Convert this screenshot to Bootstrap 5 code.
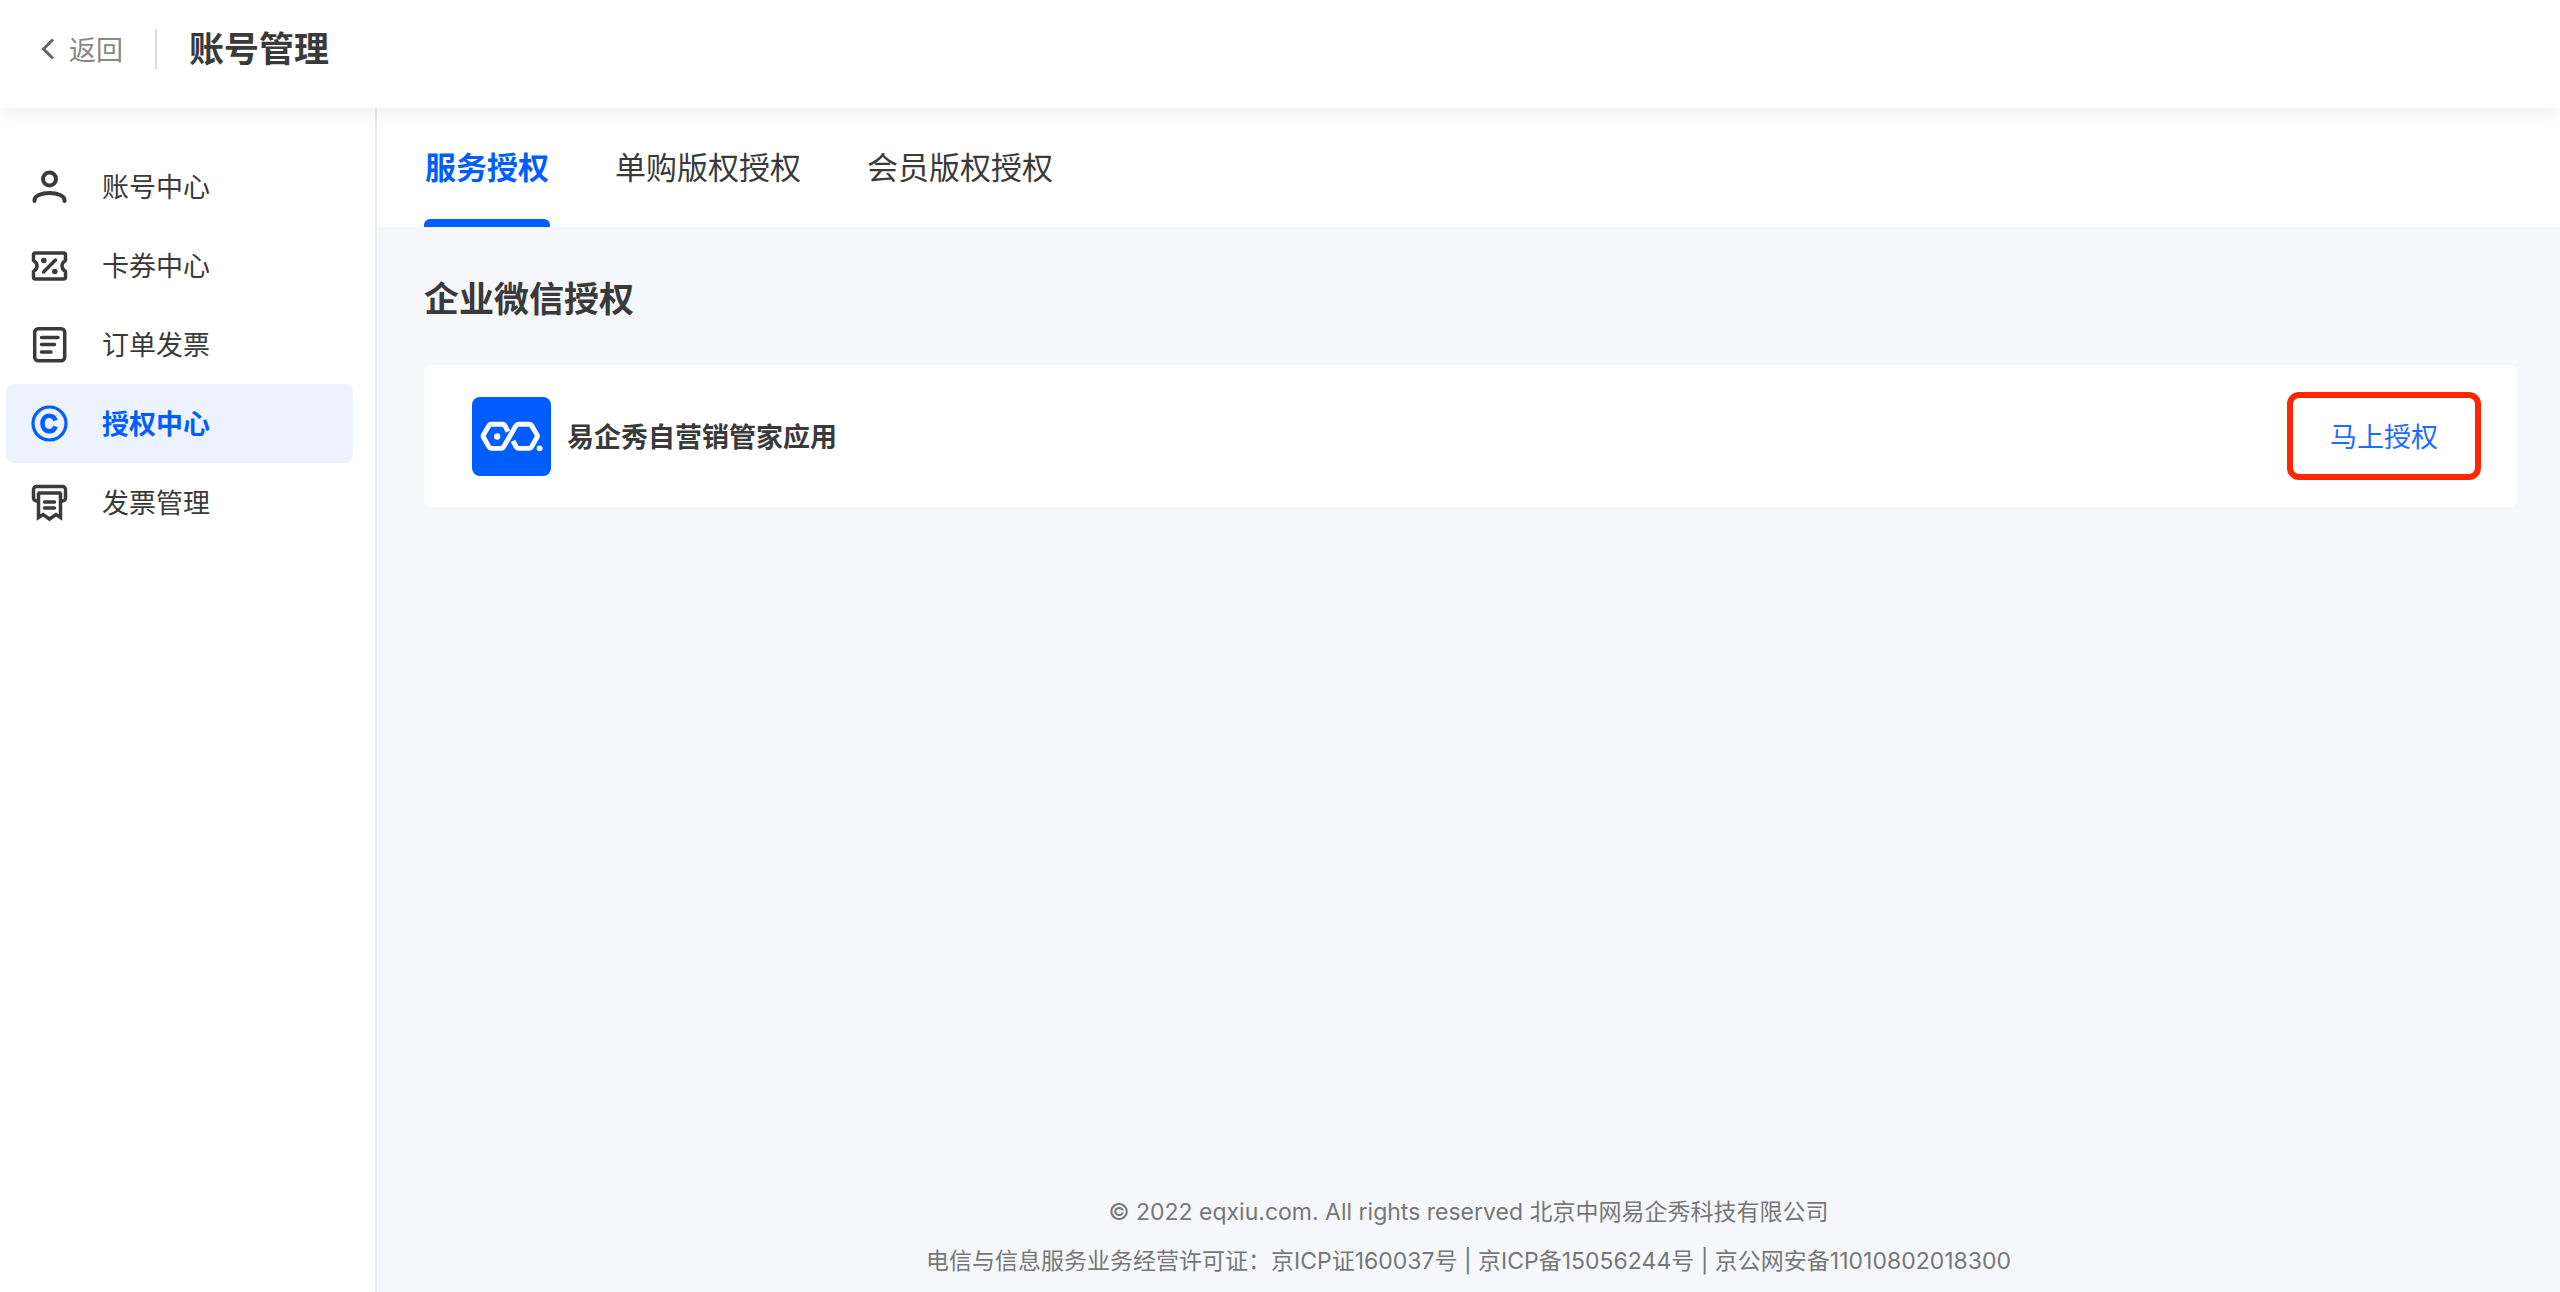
<!DOCTYPE html>
<html lang="zh-CN">
<head>
<meta charset="utf-8">
<meta name="viewport" content="width=device-width, initial-scale=1">
<title>账号管理</title>
<link href="https://cdn.jsdelivr.net/npm/bootstrap@5.3.0/dist/css/bootstrap.min.css" rel="stylesheet">
<style>
  :root { --brand: #005dff; --ink: #3a3a3a; --canvas: #f5f7fb; }
  body { font-family: "Noto Sans CJK SC", sans-serif; font-size: 27px; line-height: 40px; color: var(--ink); background: #fff; }
  a { text-decoration: none; }
  svg { display: block; flex: none; }
  .topbar { height: 108px; padding: 0 40px 10px; box-shadow: 0 2px 20px rgba(0, 0, 0, .09); position: relative; z-index: 2; }
  .back-link { color: #888; gap: 13px; }
  .topbar-rule { width: 2px; height: 40px; background: #ddd; margin: 0 32px; }
  .page-title, .section-title { font-size: 35px; line-height: 48px; font-weight: 700; }
  .page-title { padding-bottom: 4px; }
  .sidebar { width: 377px; padding: 39px 22px 39px 6px; border-right: 2px solid #e8ebf0; }
  .side-link { height: 79px; padding: 0 23px 2px; gap: 33px; border-radius: 8px; color: var(--ink); }
  .side-link.active { background: #ecf3ff; color: var(--brand); font-weight: 700; }
  .tabbar { height: 119px; padding: 0 47px; gap: 64px; font-size: 31px; }
  .tab-link { color: var(--ink); padding: 4px 1px 0; border-bottom: 8px solid transparent; position: relative; }
  .tab-link.active { color: var(--brand); font-weight: 700; }
  .tab-link.active::after { content: ""; position: absolute; left: 0; right: 0; bottom: -8px; height: 8px; border-radius: 6px 6px 0 0; background: var(--brand); }
  .workspace { background: var(--canvas); }
  .content-area { padding: 46px 43px 46px 47px; }
  .app-card { height: 142px; margin-top: 44px; padding: 0 36px 0 48px; border-radius: 8px; gap: 16px; }
  .app-name { font-weight: 700; }
  .grant-btn { width: 194px; height: 88px; border: 6px solid #ff2600; border-radius: 12px; background: #fff; color: #1a6dff; padding: 0; }
  .site-footer { font-family: Inter, "Noto Sans CJK SC", sans-serif; font-size: 23px; line-height: 49px; color: #777; padding-bottom: 6px; }
</style>
</head>
<body class="d-flex flex-column min-vh-100">
<header class="topbar d-flex align-items-center bg-white">
  <a class="back-link d-flex align-items-center" href="#">
    <svg width="16" height="24" viewBox="0 0 16 24" fill="none" stroke="#666" stroke-width="3"><path d="M13 2.500L3.500 12l9.500 9.500"/></svg>
    <span>返回</span>
  </a>
  <div class="topbar-rule"></div>
  <h1 class="page-title m-0">账号管理</h1>
</header>
<div class="d-flex flex-grow-1">
  <nav class="sidebar flex-shrink-0" aria-label="账号管理">
    <a class="side-link d-flex align-items-center" href="#">
      <svg width="40" height="40" viewBox="0 0 40 40" fill="none" stroke="currentColor" stroke-width="4" stroke-linecap="round"><circle cx="20.500" cy="13" r="6.500"/><path d="M5.500 35v-1c0-4 6.500-7 15-7s15 3 15 7v1"/></svg>
      <span>账号中心</span>
    </a>
    <a class="side-link d-flex align-items-center" href="#">
      <svg width="40" height="40" viewBox="0 0 40 40" fill="none" stroke="currentColor" stroke-width="3.500" stroke-linecap="round" stroke-linejoin="round"><path d="M6.500 8h28a2 2 0 0 1 2 2v5.500c-2 1.200-3.500 3-3.500 5.500s1.500 4.300 3.500 5.500V32a2 2 0 0 1-2 2h-28a2 2 0 0 1-2-2v-5.500c2-1.200 3.500-3 3.500-5.500s-1.500-4.300-3.500-5.500V10a2 2 0 0 1 2-2z"/><path d="M14.500 27L26.500 15"/><circle cx="14.800" cy="15.500" r="2.800" fill="currentColor" stroke="none"/><circle cx="25.800" cy="26.500" r="2.800" fill="currentColor" stroke="none"/></svg>
      <span>卡券中心</span>
    </a>
    <a class="side-link d-flex align-items-center" href="#">
      <svg width="40" height="40" viewBox="0 0 40 40" fill="none" stroke="currentColor" stroke-width="3.500" stroke-linecap="round" stroke-linejoin="round"><rect x="5.700" y="4.700" width="30" height="32" rx="3.500"/><path d="M12.500 13.500h16.500M12.500 20.500h13M12.500 28h9.500"/></svg>
      <span>订单发票</span>
    </a>
    <a class="side-link active d-flex align-items-center" href="#" aria-current="page">
      <svg width="40" height="40" viewBox="0 0 40 40" fill="none" stroke="currentColor" stroke-width="3.200"><circle cx="20.500" cy="20.500" r="16.500"/><path stroke-width="4.600" d="M26.500 17.500c-.900-2.800-3-4.700-6.200-4.700-4.300 0-6.800 3.200-6.800 7.700s2.500 7.700 6.800 7.700c3.200 0 5.300-1.900 6.200-4.700"/></svg>
      <span>授权中心</span>
    </a>
    <a class="side-link d-flex align-items-center" href="#">
      <svg width="40" height="40" viewBox="0 0 40 40" fill="none" stroke="currentColor" stroke-width="3.500"><path d="M10 19H7.500a3 3 0 0 1-3-3V7.500a3 3 0 0 1 3-3h26a3 3 0 0 1 3 3V16a3 3 0 0 1-3 3H31"/><path d="M8.500 11h24"/><path d="M9.500 11v24.500l4.500-3 6.500 4.500 6.500-4.500 4.500 3V11"/><path stroke-linecap="round" d="M15.500 20h10M15.500 26h10"/></svg>
      <span>发票管理</span>
    </a>
  </nav>
  <div class="workspace flex-grow-1 d-flex flex-column">
    <nav class="tabbar d-flex bg-white" aria-label="授权类型">
      <a class="tab-link active d-flex align-items-center" href="#" aria-current="page">服务授权</a>
      <a class="tab-link d-flex align-items-center" href="#">单购版权授权</a>
      <a class="tab-link d-flex align-items-center" href="#">会员版权授权</a>
    </nav>
    <main class="content-area flex-grow-1">
      <h2 class="section-title m-0">企业微信授权</h2>
      <section class="app-card d-flex align-items-center bg-white">
        <svg width="79" height="79" viewBox="0 0 80 80" aria-hidden="true"><rect width="80" height="80" rx="8" fill="#005dff"/><g fill="none" stroke="#fff" stroke-width="5" stroke-linejoin="round"><path d="M36.500 35L33 28.500Q32.300 27.500 31 27.500H19.500Q18 27.500 17.200 28.800L11.500 38.500Q11 39.500 11.500 40.500L17.200 50.500Q18 52 19.500 52H29.500Q31 52 32 50.500L44.500 29Q45.500 27.500 47 27.500H58Q59.500 27.500 60.300 28.800L66 38.500Q66.500 39.500 66 40.500L60.300 50.500Q59.500 52 58 52H47Q45.700 52 45 51L41.500 44.500"/></g><circle cx="25.500" cy="40" r="3.200" fill="#fff"/><circle cx="68.500" cy="52" r="3" fill="#fff"/></svg>
        <span class="app-name flex-grow-1">易企秀自营销管家应用</span>
        <button class="grant-btn" type="button">马上授权</button>
      </section>
    </main>
    <footer class="site-footer text-center">
      <div>© 2022 eqxiu.com. All rights reserved 北京中网易企秀科技有限公司</div>
      <div>电信与信息服务业务经营许可证：京ICP证160037号 | 京ICP备15056244号 | 京公网安备11010802018300</div>
    </footer>
  </div>
</div>
<script src="https://cdn.jsdelivr.net/npm/bootstrap@5.3.0/dist/js/bootstrap.bundle.min.js"></script>
</body>
</html>
